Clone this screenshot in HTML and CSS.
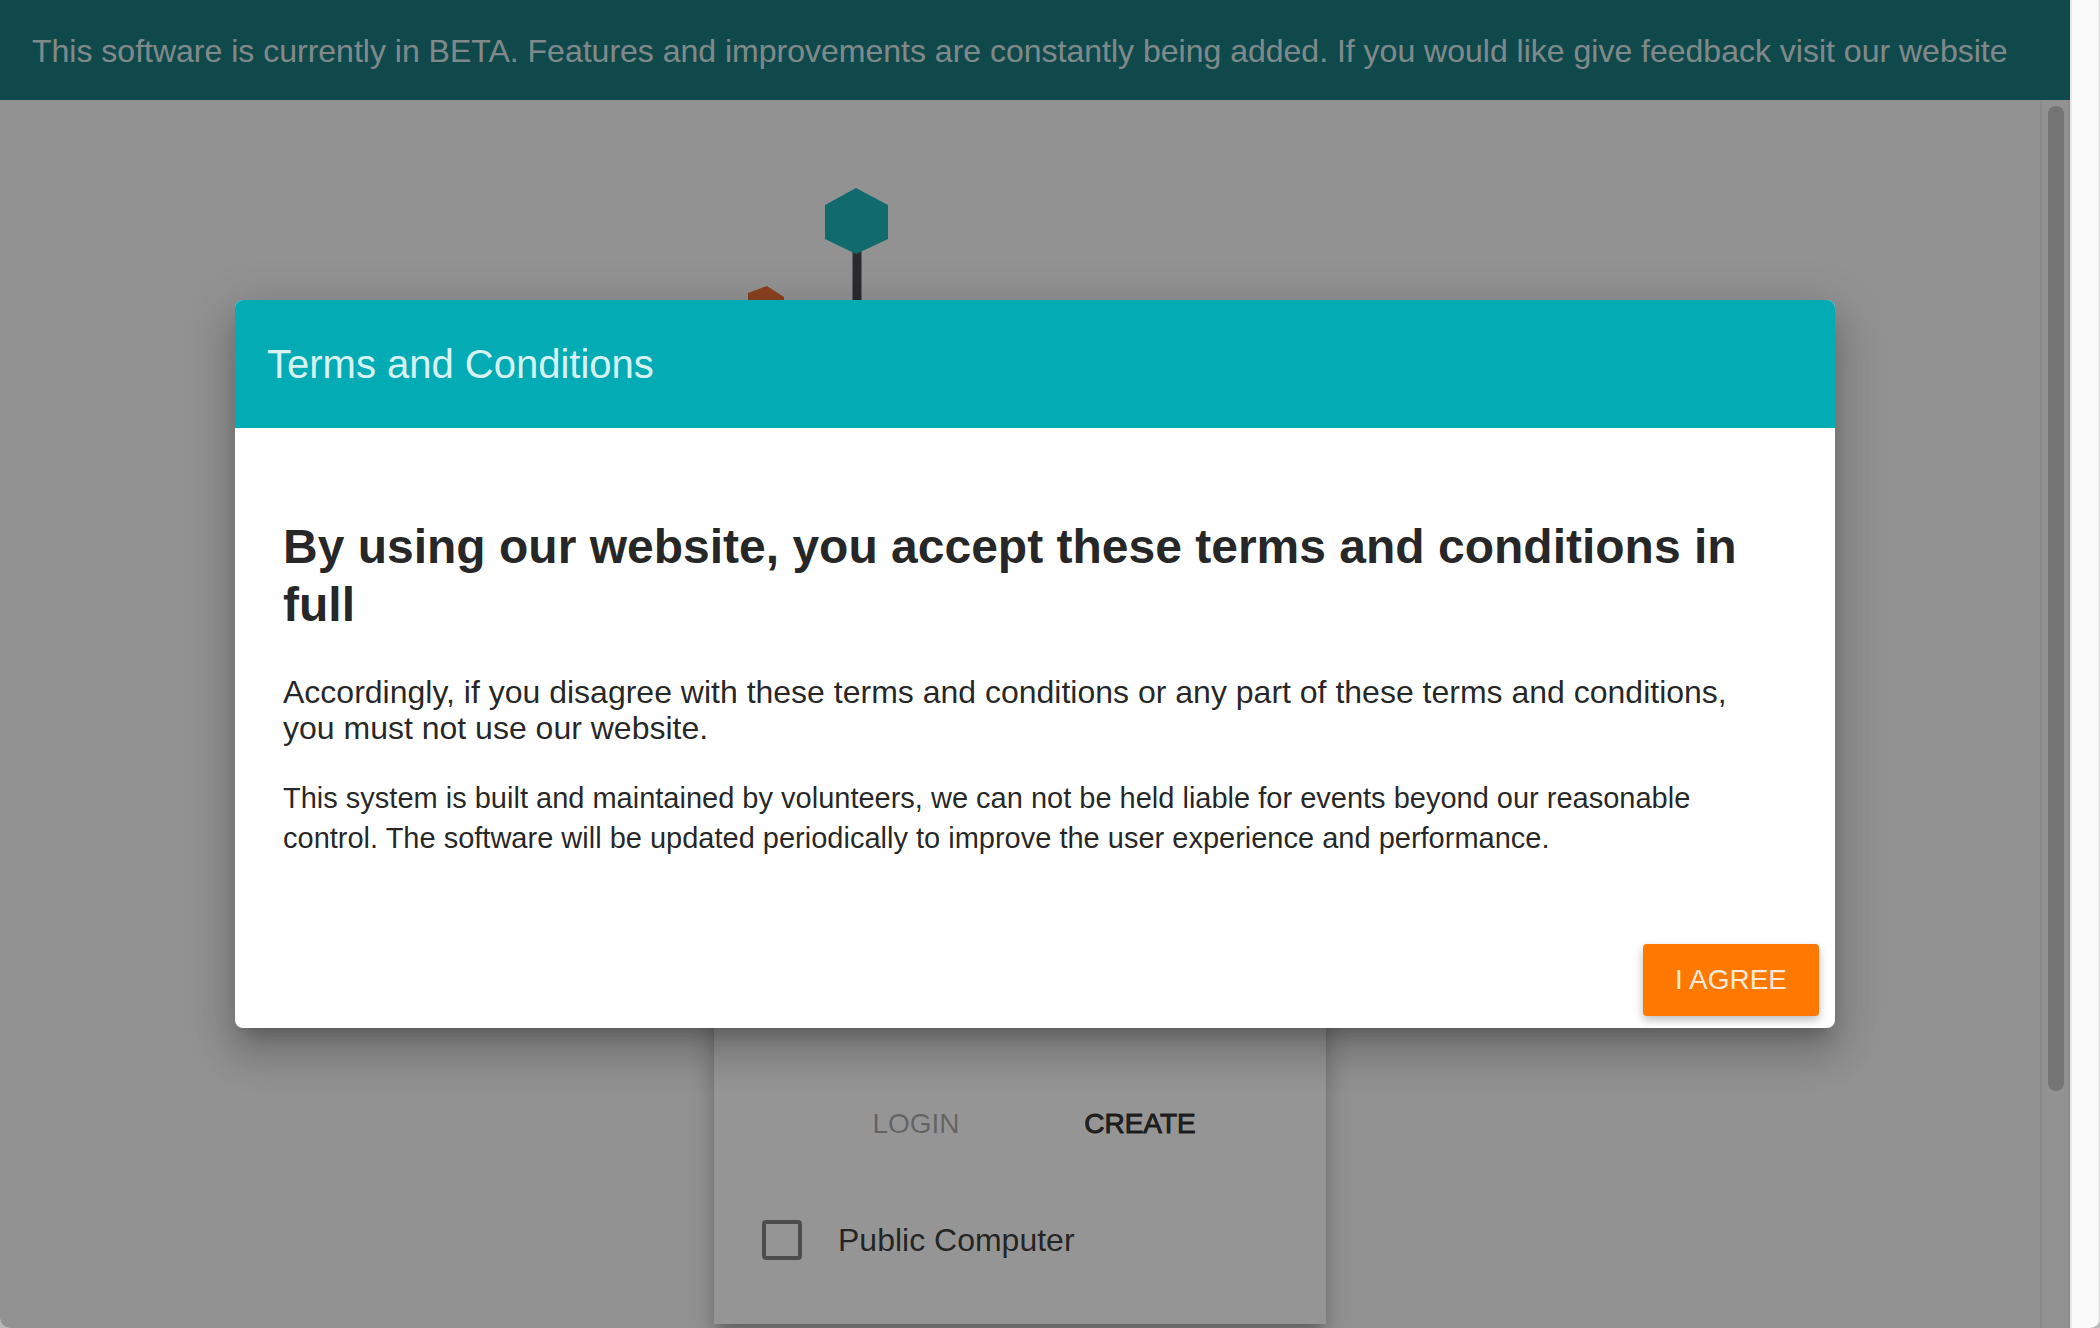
FILE: index.html
```html
<!DOCTYPE html>
<html lang="en">
<head>
  <meta charset="utf-8">
  <title>Terms and Conditions</title>
  <link rel="stylesheet" href="styles.css">
</head>
<body>
  <div class="window">
    <div class="app">
      <header class="banner">This software is currently in BETA. Features and improvements are constantly being added. If you would like give feedback visit our website</header>
      <div class="scroller">
        <main class="content">
          <svg class="logo" viewBox="0 0 612 312" aria-hidden="true">
            <path d="M143 60V312" stroke="#353538" stroke-width="9"/>
            <path d="M142 0L174 17V51L142 66L111 51V17Z" fill="#02adb1"/>
            <path d="M53 98L70 109V128L53 138L34 128V105Z" fill="#ed6121"/>
          </svg>
          <form class="card">
            <div class="card-actions">
              <button class="flat-button" type="submit" disabled>LOGIN</button>
              <button class="flat-button" type="button">CREATE</button>
            </div>
            <label class="check"><input class="check-box" type="checkbox">Public Computer</label>
          </form>
        </main>
        <div class="scroll-track"><div class="scroll-thumb"></div></div>
      </div>
      <div class="backdrop">
        <section class="dialog" role="dialog" aria-modal="true" aria-labelledby="dialog-title">
          <header class="dialog-toolbar"><h2 class="dialog-title" id="dialog-title">Terms and Conditions</h2></header>
          <div class="dialog-content">
            <h1 class="headline">By using our website, you accept these terms and conditions in full</h1>
            <h3 class="subhead">Accordingly, if you disagree with these terms and conditions or any part of these terms and conditions, you must not use our website.</h3>
            <p class="body-text">This system is built and maintained by volunteers, we can not be held liable for events beyond our reasonable control. The software will be updated periodically to improve the user experience and performance.</p>
          </div>
          <footer class="dialog-actions"><button class="raised-button" type="button">I AGREE</button></footer>
        </section>
      </div>
    </div>
    <div class="gutter"></div>
  </div>
</body>
</html>
```
FILE: styles.css
```css
* {
  box-sizing: border-box;
}

body {
  margin: 0;
  background: #b8b8b8;
  color: rgba(0, 0, 0, 0.87);
  font-family: "Liberation Sans", Arial, sans-serif;
  font-size: 32px;
}

button {
  border: 0;
  font-family: inherit;
  font-size: 28px;
}

.window {
  display: grid;
  grid-template-columns: 1fr 30px;
  height: 100vh;
  overflow: hidden;
  border-radius: 0 0 10px 10px;
}

.app {
  position: relative;
  display: flex;
  flex-direction: column;
  min-width: 0;
  min-height: 0;
  background: #fafafa;
}

.banner {
  flex: none;
  padding: 32px 32px 30px;
  background: #006e73;
  color: rgba(255, 255, 255, 0.87);
  line-height: 38px;
  white-space: nowrap;
}

.scroller {
  display: flex;
  flex: 1;
  min-height: 0;
  overflow: hidden;
}

.content {
  display: flex;
  flex: 1;
  flex-direction: column;
  align-items: center;
  padding-top: 88px;
}

.logo {
  flex: none;
  width: 612px;
  height: 312px;
}

.card {
  flex: none;
  width: 612px;
  margin-top: 200px;
  padding: 388px 48px 48px;
  background: #fff;
  box-shadow: 0 10px 10px -6px rgba(0, 0, 0, 0.2), 0 16px 20px 2px rgba(0, 0, 0, 0.14), 0 6px 28px 4px rgba(0, 0, 0, 0.12);
}

.card-actions {
  display: flex;
  justify-content: center;
  gap: 48px;
  padding-left: 16px;
}

.flat-button {
  min-width: 176px;
  height: 72px;
  padding: 0 12px;
  background: transparent;
  color: rgba(0, 0, 0, 0.87);
  -webkit-text-stroke: 1px currentColor;
}

.flat-button:disabled {
  color: rgba(0, 0, 0, 0.38);
  -webkit-text-stroke: 0;
}

.check {
  display: flex;
  align-items: center;
  gap: 36px;
  height: 72px;
  margin-top: 44px;
}

.check-box {
  width: 40px;
  height: 40px;
  margin: 0;
  appearance: none;
  border: 4px solid rgba(0, 0, 0, 0.54);
  border-radius: 4px;
}

.scroll-track {
  width: 30px;
  padding: 6px 4px 6px 6px;
  border: solid #ececec;
  border-width: 0 2px;
}

.scroll-thumb {
  width: 16px;
  height: 81%;
  border-radius: 8px;
  background: #c1c1c1;
}

.backdrop {
  position: absolute;
  inset: 0;
  display: flex;
  align-items: center;
  justify-content: center;
  background: rgba(33, 33, 33, 0.48);
}

.dialog {
  width: 80%;
  max-width: 1600px;
  overflow: hidden;
  border-radius: 8px;
  background: #fff;
  box-shadow: 0 14px 16px -8px rgba(0, 0, 0, 0.2), 0 26px 38px 4px rgba(0, 0, 0, 0.14), 0 10px 48px 8px rgba(0, 0, 0, 0.12);
}

.dialog-toolbar {
  display: flex;
  align-items: center;
  height: 128px;
  padding: 0 32px;
  background: #03acb4;
  color: rgba(255, 255, 255, 0.87);
}

.dialog-title {
  margin: 0;
  font-size: 40px;
  font-weight: 400;
}

.dialog-content {
  padding: 90px 48px 86px;
}

.headline {
  margin: 0 0 40px;
  font-size: 48px;
  line-height: 58px;
}

.subhead {
  margin: 0 0 32px;
  font-size: 32px;
  font-weight: 400;
  line-height: 36px;
}

.body-text {
  margin: 0;
  font-size: 29px;
  line-height: 40px;
}

.dialog-actions {
  display: flex;
  justify-content: flex-end;
  padding: 0 16px 12px;
}

.raised-button {
  min-width: 176px;
  height: 72px;
  border-radius: 4px;
  background: #ff7800;
  box-shadow: 0 4px 10px rgba(0, 0, 0, 0.26);
  color: rgba(255, 255, 255, 0.87);
}

.gutter {
  border: solid #e8e8e8;
  border-width: 0 2px;
  background: #fafafa;
}
```
